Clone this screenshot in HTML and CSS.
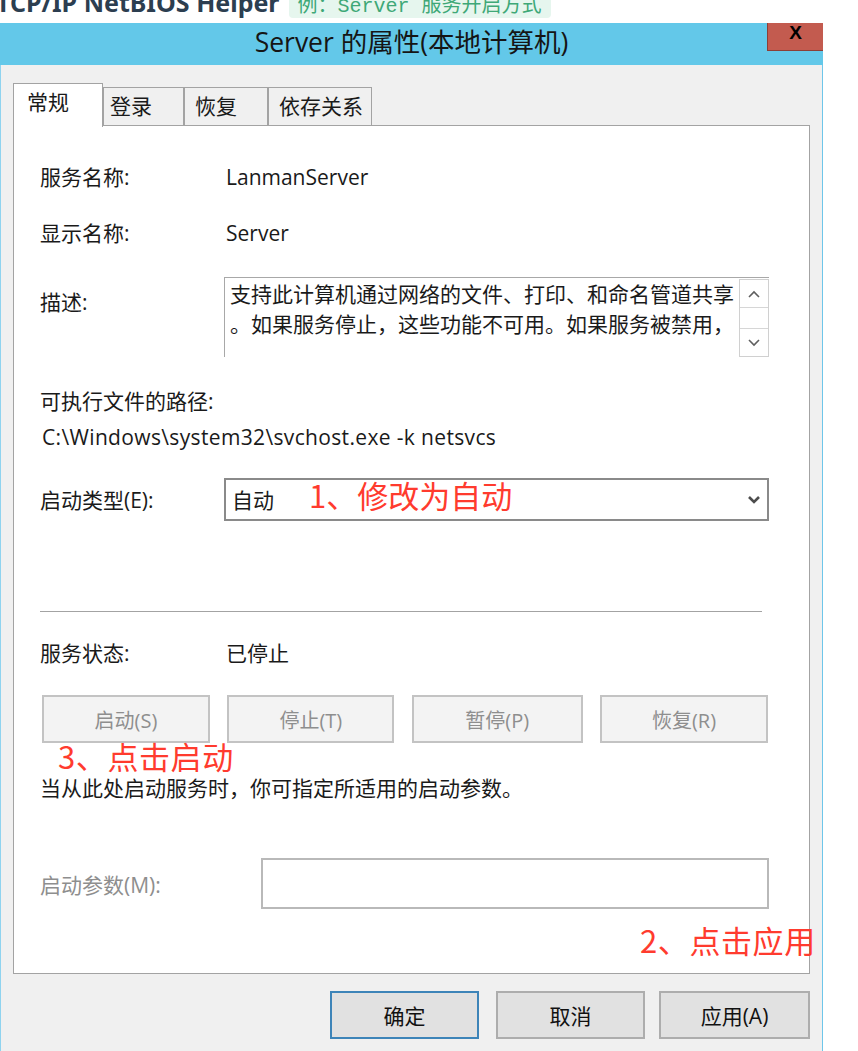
FILE: index.html
```html
<!DOCTYPE html>
<html lang="zh-CN">
<head>
<meta charset="utf-8">
<title>Server 的属性</title>
<link rel="stylesheet" href="styles.css">
</head>
<body>
<div class="page-head">
  <div class="head-inner">
    <h3 class="head-title">TCP/IP NetBIOS Helper</h3>
    <code class="head-code">例：Server 服务开启方式</code>
  </div>
</div>

<div class="dialog">
  <div class="titlebar">
    <span class="title">Server 的属性(本地计算机)</span>
    <span class="close">X</span>
  </div>
  <div class="body">
    <div class="tabs">
      <div class="tab tab-active t1">常规</div>
      <div class="tab t2">登录</div>
      <div class="tab t3">恢复</div>
      <div class="tab t4">依存关系</div>
    </div>
    <div class="panel">
      <div class="row row-name">
        <span class="label">服务名称:</span>
        <span class="value">LanmanServer</span>
      </div>
      <div class="row row-display">
        <span class="label">显示名称:</span>
        <span class="value">Server</span>
      </div>
      <div class="row row-desc">
        <span class="label label-desc">描述:</span>
        <div class="desc">
          <div class="desc-text">支持此计算机通过网络的文件、打印、和命名管道共享<br>。如果服务停止，这些功能不可用。如果服务被禁用，</div>
          <div class="scroll">
            <div class="scroll-btn scroll-up">
              <svg width="12" height="8" viewBox="0 0 12 8"><polyline points="1,7 6,2 11,7" fill="none" stroke="#5f5f5f" stroke-width="1.6"/></svg>
            </div>
            <div class="scroll-track"></div>
            <div class="scroll-btn scroll-down">
              <svg width="12" height="8" viewBox="0 0 12 8"><polyline points="1,1 6,6 11,1" fill="none" stroke="#5f5f5f" stroke-width="1.6"/></svg>
            </div>
          </div>
        </div>
      </div>
      <div class="text-line exec-label">可执行文件的路径:</div>
      <div class="text-line exec-path">C:\Windows\system32\svchost.exe -k netsvcs</div>
      <div class="row row-startup">
        <span class="label">启动类型(E):</span>
        <div class="select">
          <span class="select-value">自动</span>
          <span class="note note-1">1、修改为自动</span>
          <svg class="select-arrow" width="14" height="10" viewBox="0 0 14 10"><polyline points="2,2 7,7 12,2" fill="none" stroke="#4d4d4d" stroke-width="2.6"/></svg>
        </div>
      </div>
      <div class="rule"></div>
      <div class="row row-status">
        <span class="label">服务状态:</span>
        <span class="value">已停止</span>
      </div>
      <div class="svc-buttons">
        <div class="btn-dis bw-168">启动(S)</div>
        <div class="btn-dis bw-167">停止(T)</div>
        <div class="btn-dis bw-171">暂停(P)</div>
        <div class="btn-dis bw-168">恢复(R)</div>
      </div>
      <div class="text-line hint">当从此处启动服务时，你可指定所适用的启动参数。</div>
      <div class="row-param">
        <span class="label label-dis">启动参数(M):</span>
        <div class="param-input"></div>
      </div>
      <span class="note note-3">3、点击启动</span>
      <span class="note note-2">2、点击应用</span>
    </div>
    <div class="actions">
      <div class="btn btn-primary">确定</div>
      <div class="btn">取消</div>
      <div class="btn btn-apply">应用(A)</div>
    </div>
  </div>
</div>
</body>
</html>
```

FILE: styles.css
```css
* { box-sizing: border-box; }

body {
  margin: 0;
  background: #ffffff;
  font-family: "Open Sans", "Noto Sans CJK SC", sans-serif;
  color: #1a1a1a;
}

/* ---------- page heading (cut off at top) ---------- */
.page-head {
  height: 23px;
  overflow: hidden;
}
.head-inner {
  display: flex;
  align-items: flex-start;
  margin-top: -10px;
  margin-left: -4px;
}
.head-title {
  margin: 0;
  font-family: "Noto Sans", "Noto Sans CJK SC", sans-serif;
  font-size: 25px;
  line-height: 25px;
  font-weight: 700;
  color: #2c3e50;
  white-space: nowrap;
}
.head-code {
  margin-left: 9px;
  margin-top: 0;
  padding: 6px 9px 0 9px;
  height: 28px;
  line-height: 22px;
  border-radius: 4px;
  background: #e6f6ee;
  color: #3ea877;
  font-family: "Liberation Mono", "Noto Sans CJK SC", monospace;
  font-size: 20px;
  white-space: nowrap;
}

/* ---------- dialog ---------- */
.dialog {
  width: 823px;
}
.titlebar {
  position: relative;
  height: 42px;
  background: #63c8e9;
  display: flex;
  align-items: center;
  justify-content: center;
}
.title {
  font-size: 26.5px;
  color: #151515;
  line-height: 30px;
  padding-bottom: 4px;
}
.close {
  position: absolute;
  top: 0;
  right: 0;
  width: 56px;
  height: 28px;
  background: #c35b4f;
  border-left: 1px solid #8c3f36;
  border-bottom: 1px solid #8c3f36;
  color: #000;
  font-family: "Liberation Sans", sans-serif;
  font-weight: 700;
  font-size: 19px;
  display: flex;
  align-items: center;
  justify-content: center;
  padding-bottom: 7px;
}

.body {
  background: #f0f0f0;
  border-left: 1px solid #8fd3ef;
  border-right: 1px solid #6ec6ea;
  padding: 18px 12px 12px 12px;
}

/* ---------- tabs ---------- */
.tabs {
  display: flex;
  align-items: flex-end;
  height: 42px;
}
.tab {
  height: 38px;
  border: 1px solid #a3a3a3;
  border-bottom: none;
  background: #f0f0f0;
  font-size: 21px;
  line-height: 28px;
  padding-top: 4px;
  white-space: nowrap;
}
.tab-active {
  position: relative;
  z-index: 1;
  height: 44px;
  margin-bottom: -2px;
  background: #ffffff;
}
.t1 { width: 90px; padding-left: 13px; }
.t2 { width: 81px; padding-left: 6px; }
.t3 { width: 84px; padding-left: 10px; }
.t4 { width: 104px; padding-left: 10px; }

/* ---------- panel ---------- */
.panel {
  position: relative;
  background: #ffffff;
  border: 1px solid #a3a3a3;
  padding: 37px 40px 64px 26px;
  font-size: 21px;
}
.row {
  display: grid;
  grid-template-columns: 184px 545px;
  line-height: 28px;
}
.label { white-space: nowrap; }
.value { padding-left: 2px; white-space: nowrap; }
.row-display { margin-top: 28px; }
.row-desc { margin-top: 30px; }
.label-desc { padding-top: 11px; }

.desc {
  display: flex;
  height: 80px;
  border-top: 1px solid #a8a8a8;
  border-left: 1px solid #a8a8a8;
}
.desc-text {
  flex: 1;
  overflow: hidden;
  white-space: nowrap;
  padding: 1px 0 0 5px;
  line-height: 30px;
}
.scroll {
  width: 30px;
  margin-top: 1px;
  display: flex;
  flex-direction: column;
  border: 1px solid #d0d0d0;
  background: #ffffff;
}
.scroll-btn {
  height: 28px;
  display: flex;
  align-items: center;
  justify-content: center;
}
.scroll-up { border-bottom: 1px solid #d6d6d6; }
.scroll-down { border-top: 1px solid #d6d6d6; }
.scroll-track { flex: 1; }

.text-line { line-height: 28px; white-space: nowrap; }
.exec-label { margin-top: 30px; }
.exec-path { margin-top: 8px; padding-left: 2px; letter-spacing: 0.35px; }

.row-startup {
  margin-top: 27px;
  align-items: center;
}
.select {
  position: relative;
  height: 43px;
  border: 2px solid #8a8a8a;
  display: flex;
  align-items: center;
  padding-left: 6px;
  padding-top: 1px;
}
.select-value { line-height: 28px; }
.select-arrow {
  position: absolute;
  right: 6px;
  top: 15px;
}

.rule {
  margin-top: 90px;
  width: 722px;
  border-top: 1px solid #a3a3a3;
}

.row-status { margin-top: 27px; }

.svc-buttons {
  margin-top: 28px;
  margin-left: 2px;
  width: 726px;
  display: flex;
  justify-content: space-between;
}
.btn-dis {
  height: 48px;
  border: 2px solid #c3c3c3;
  background: #f3f3f3;
  color: #8e8e8e;
  display: flex;
  align-items: center;
  justify-content: center;
  font-size: 20px;
}
.bw-167 { width: 167px; }
.bw-168 { width: 168px; }
.bw-171 { width: 171px; }

.hint { margin-top: 31px; }

.row-param {
  margin-top: 56px;
  display: grid;
  grid-template-columns: 221px 508px;
  align-items: center;
}
.label-dis { color: #8e8e8e; line-height: 28px; padding-top: 3px; }
.param-input {
  height: 51px;
  border: 2px solid #b9b9b9;
  background: #ffffff;
}

/* ---------- red annotations ---------- */
.note {
  position: absolute;
  font-family: "Noto Sans CJK SC", sans-serif;
  font-size: 31px;
  line-height: 34px;
  color: #ff3b2e;
  white-space: nowrap;
}
.note-1 { left: 83px; top: -2px; }
.note-3 { left: 44px; top: 613px; letter-spacing: 0.6px; }
.note-2 { left: 626px; top: 797px; letter-spacing: 0.6px; }

/* ---------- bottom buttons ---------- */
.actions {
  margin-top: 17px;
  display: flex;
  justify-content: flex-end;
  gap: 17px;
}
.btn {
  width: 149px;
  height: 48px;
  border: 2px solid #adadad;
  background: #e1e1e1;
  display: flex;
  align-items: center;
  justify-content: center;
  font-size: 21px;
  color: #111;
}
.btn-primary { border-color: #3d84b8; }
.btn-apply { width: 151px; margin-left: -3px; }
```
